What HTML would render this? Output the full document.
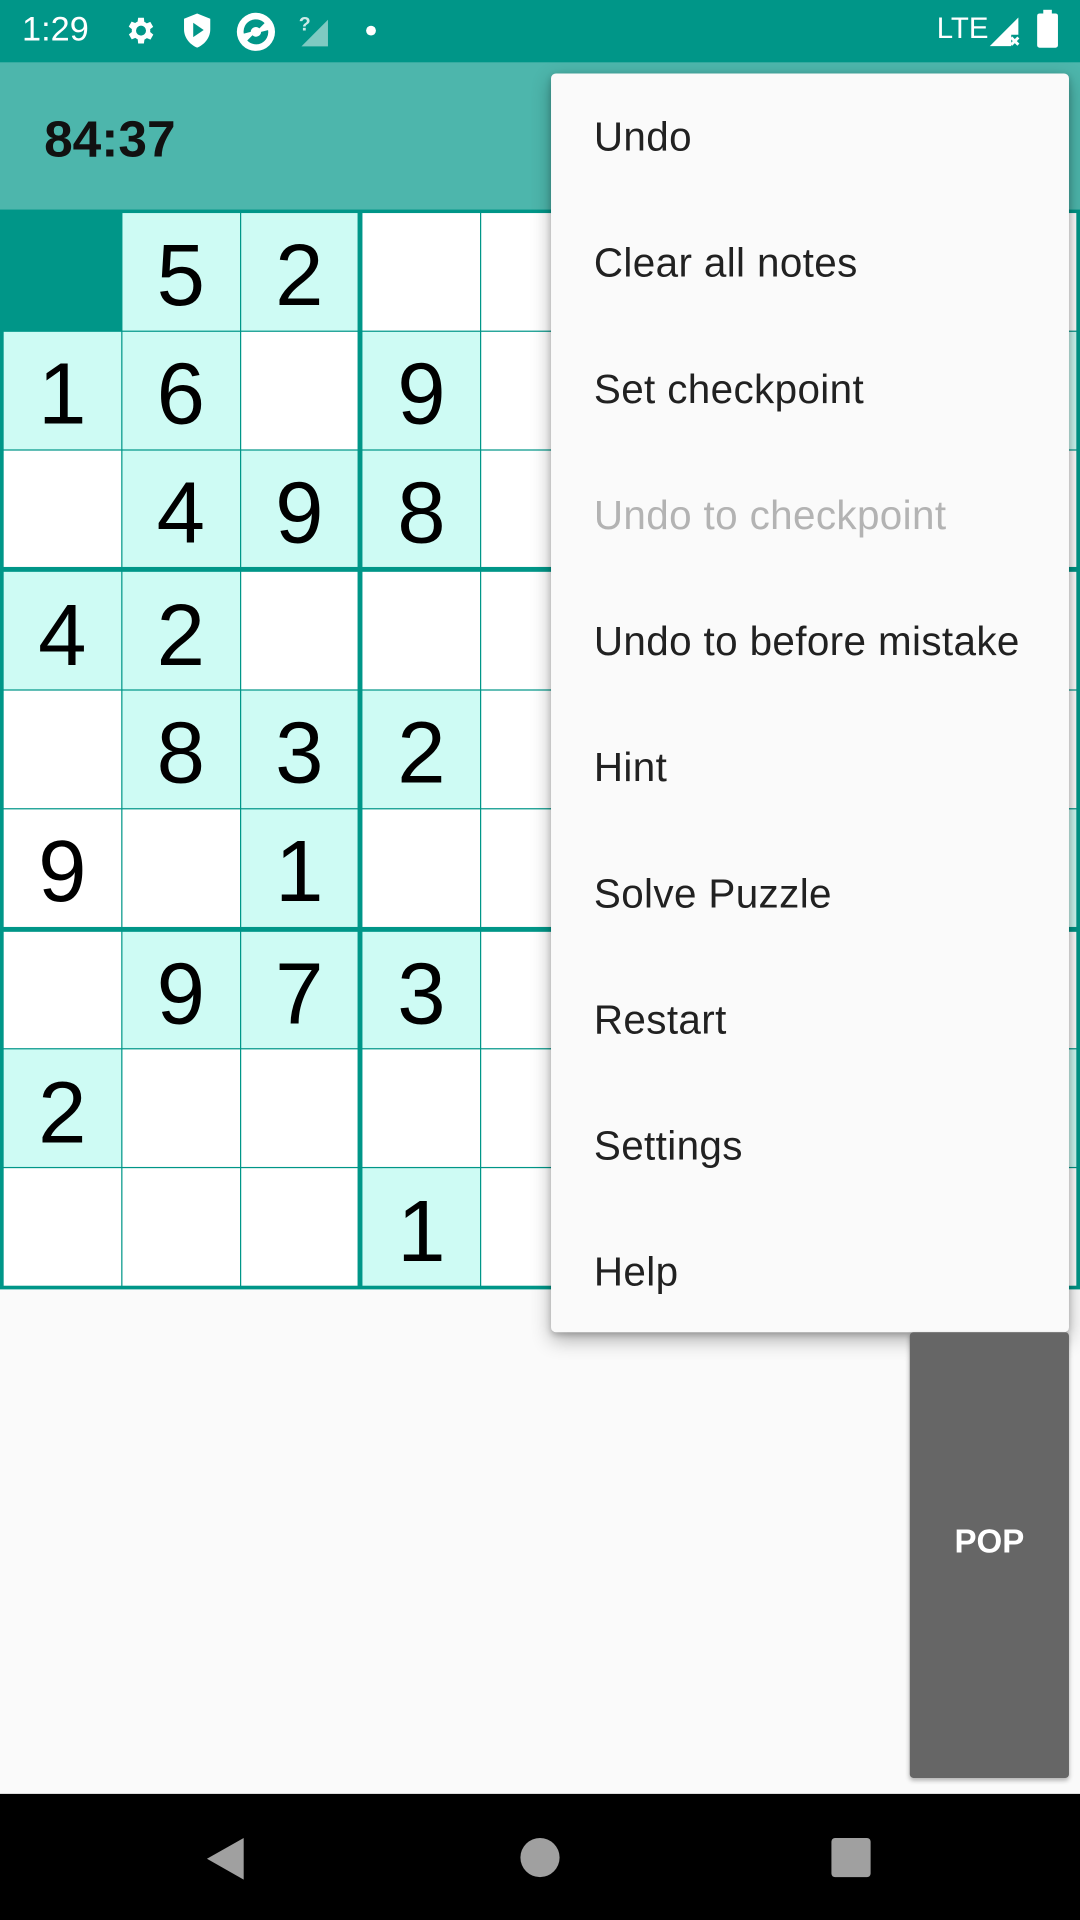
<!DOCTYPE html>
<html><head><meta charset="utf-8"><style>
html,body{margin:0;padding:0;background:#fafafa;overflow:hidden;width:1080px;height:1920px}
#w{position:absolute;left:0;top:0;width:882px;height:1568px;transform:scale(1.22449);transform-origin:0 0;font-family:"Liberation Sans",sans-serif;background:#fafafa}
.sb{position:absolute;left:0;top:0;width:882px;height:51px;background:#009688;color:#fff}
.ab{position:absolute;left:0;top:51px;width:882px;height:120px;background:#4db6ac}
.grid{position:absolute;left:0;top:171px;width:876px;height:876px;padding:3px;background:#009688;display:grid;grid-template-columns:1fr 1fr 1fr;grid-template-rows:1fr 1fr 1fr;gap:4px}
.box{display:grid;grid-template-columns:1fr 1fr 1fr;grid-template-rows:1fr 1fr 1fr;gap:1px;background:#009688}
.c{background:#fff;font-size:71px;color:#000;display:flex;align-items:center;justify-content:center;line-height:1;padding-top:8px;box-sizing:border-box}
.y{background:#cefbf4}.s{background:#009688}
.menu{position:absolute;left:450px;top:60px;width:423px;height:1028px;background:#fafafa;border-radius:4px;box-shadow:0 6px 16px rgba(0,0,0,.3),0 2px 5px rgba(0,0,0,.2)}
.mi{position:absolute;left:35px;font-size:33px;letter-spacing:0.3px;color:#212121;line-height:40px}
.pop{position:absolute;left:743px;top:1088px;width:130px;height:364px;background:#666;border-radius:3px;color:#fff;font-weight:bold;font-size:27px;display:flex;align-items:center;justify-content:center;box-shadow:0 2px 4px rgba(0,0,0,.3);padding-bottom:22px;box-sizing:border-box}
.nav{position:absolute;left:0;top:1465px;width:882px;height:103px;background:#000}
</style></head><body><div id="w">
<div class="sb">
<div style="position:absolute;left:18px;top:8px;font-size:28px">1:29</div>
<svg style="position:absolute;left:100px;top:11px" width="28" height="28" viewBox="0 0 24 24"><path fill="#fff" d="M19.4 13a7.5 7.5 0 000-2l2.1-1.6-2-3.5-2.5 1a7 7 0 00-1.7-1L15 3h-4l-.4 2.7a7 7 0 00-1.7 1l-2.5-1-2 3.5L6.6 11a7.5 7.5 0 000 2l-2.1 1.6 2 3.5 2.5-1a7 7 0 001.7 1L11 21h4l.4-2.7a7 7 0 001.7-1l2.5 1 2-3.5zM13 15.5a3.5 3.5 0 110-7 3.5 3.5 0 010 7z"/></svg>
<svg style="position:absolute;left:148px;top:10px" width="26" height="30" viewBox="0 0 24 28"><path fill="#fff" d="M12 1L2 5v8c0 7 5 12 10 14 5-2 10-7 10-14V5z"/><path fill="#009688" d="M9 8v11l8-5.5z"/></svg>
<svg style="position:absolute;left:192px;top:9px" width="34" height="34" viewBox="0 0 24 24"><circle cx="12" cy="12" r="11" fill="#fff"/><path fill="#009688" d="M5 13a7 7 0 0112-6l-3 3a3 3 0 00-5 2zM19 11a7 7 0 01-12 6l3-3a3 3 0 005-2z"/></svg>
<div style="position:absolute;left:244px;top:12px;font-size:16px;font-weight:bold;color:#cdeae7">?</div>
<svg style="position:absolute;left:244px;top:14px" width="26" height="26" viewBox="0 0 24 24"><path fill="#7fcac2" d="M22 2v20H2z"/></svg>
<div style="position:absolute;left:299px;top:21px;width:8px;height:8px;border-radius:50%;background:#fff"></div>
<div style="position:absolute;left:765px;top:10px;font-size:24px">LTE</div>
<svg style="position:absolute;left:806px;top:12px" width="28" height="28" viewBox="0 0 24 24"><path fill="#fff" d="M22 2v12h-5v8H2z"/><path stroke="#fff" stroke-width="2" d="M17 16l5 5M22 16l-5 5"/></svg>
<div style="position:absolute;left:847px;top:11px;width:17px;height:28px;background:#fff;border-radius:2px"></div>
<div style="position:absolute;left:852px;top:8px;width:7px;height:4px;background:#fff"></div>
</div>
<div class="ab"><div style="position:absolute;left:36px;top:39px;font-size:42px;font-weight:bold;color:#111">84:37</div></div>
<div class="grid">
<div class="box"><div class="c s"></div><div class="c y">5</div><div class="c y">2</div><div class="c y">1</div><div class="c y">6</div><div class="c"></div><div class="c"></div><div class="c y">4</div><div class="c y">9</div></div>
<div class="box"><div class="c"></div><div class="c"></div><div class="c"></div><div class="c y">9</div><div class="c"></div><div class="c"></div><div class="c y">8</div><div class="c"></div><div class="c"></div></div>
<div class="box"><div class="c"></div><div class="c"></div><div class="c"></div><div class="c"></div><div class="c"></div><div class="c y"></div><div class="c"></div><div class="c"></div><div class="c"></div></div>
<div class="box"><div class="c y">4</div><div class="c y">2</div><div class="c"></div><div class="c"></div><div class="c y">8</div><div class="c y">3</div><div class="c">9</div><div class="c"></div><div class="c y">1</div></div>
<div class="box"><div class="c"></div><div class="c"></div><div class="c"></div><div class="c y">2</div><div class="c"></div><div class="c"></div><div class="c"></div><div class="c"></div><div class="c"></div></div>
<div class="box"><div class="c"></div><div class="c"></div><div class="c"></div><div class="c"></div><div class="c"></div><div class="c"></div><div class="c"></div><div class="c"></div><div class="c y"></div></div>
<div class="box"><div class="c"></div><div class="c y">9</div><div class="c y">7</div><div class="c y">2</div><div class="c"></div><div class="c"></div><div class="c"></div><div class="c"></div><div class="c"></div></div>
<div class="box"><div class="c y">3</div><div class="c"></div><div class="c"></div><div class="c"></div><div class="c"></div><div class="c"></div><div class="c y">1</div><div class="c"></div><div class="c"></div></div>
<div class="box"><div class="c"></div><div class="c"></div><div class="c"></div><div class="c"></div><div class="c"></div><div class="c y"></div><div class="c"></div><div class="c"></div><div class="c"></div></div>
</div>
<div class="menu">
<div class="mi" style="top:32px">Undo</div>
<div class="mi" style="top:135px">Clear all notes</div>
<div class="mi" style="top:238px">Set checkpoint</div>
<div class="mi" style="top:341px;color:#b3b3b3">Undo to checkpoint</div>
<div class="mi" style="top:444px">Undo to before mistake</div>
<div class="mi" style="top:547px">Hint</div>
<div class="mi" style="top:650px">Solve Puzzle</div>
<div class="mi" style="top:753px">Restart</div>
<div class="mi" style="top:856px">Settings</div>
<div class="mi" style="top:959px">Help</div>
</div>
<div class="pop">POP</div>
<div class="nav">
<svg style="position:absolute;left:166px;top:34px" width="36" height="38" viewBox="0 0 36 38"><path fill="#a0a0a0" d="M33 2v34L3 19z"/></svg>
<div style="position:absolute;left:425px;top:36px;width:32px;height:32px;border-radius:50%;background:#a0a0a0"></div>
<div style="position:absolute;left:679px;top:36px;width:32px;height:32px;border-radius:3px;background:#a0a0a0"></div>
</div>
</div></body></html>
